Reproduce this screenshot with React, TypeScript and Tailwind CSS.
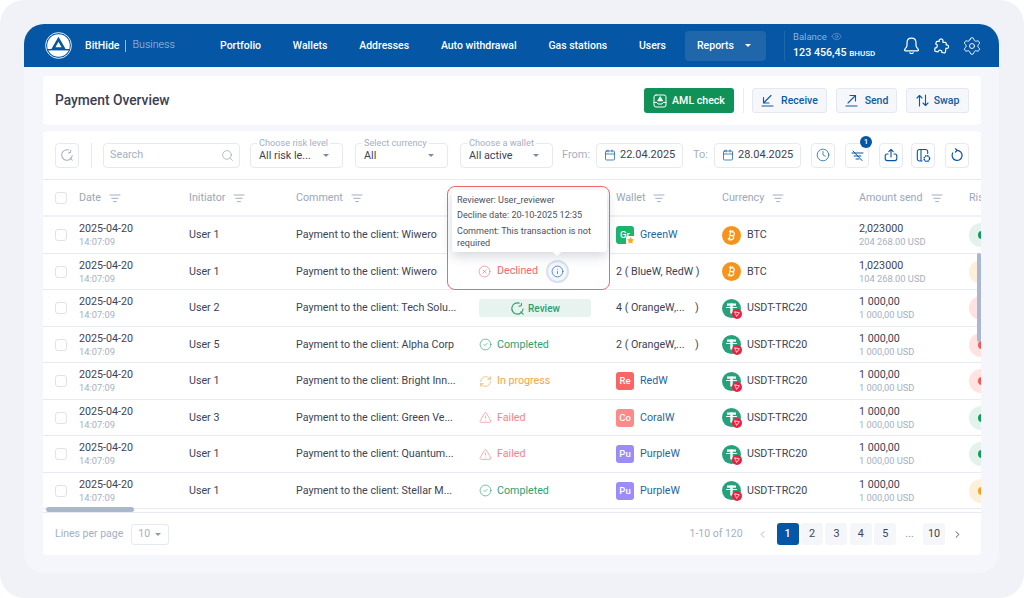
import { Bitcoin, Calendar, ChevronLeft, ChevronRight, CircleCheck, CircleX, Clock, Eye, Info, RefreshCw, Search, Settings, Star, TriangleAlert } from "lucide-react";

const cols = "grid grid-cols-[36px_110px_107px_183px_137px_106px_137px_110px_60px] items-center";

const rows = [
  { user: "User 1", comment: "Payment to the client: Wiwero", status: "hidden", wallet: "Gr", walletBg: "bg-[#1db56c]", name: "GreenW", cur: "BTC", amount: "2,023000", usd: "204 268.00 USD", risk: "green", star: true },
  { user: "User 1", comment: "Payment to the client: Wiwero", status: "hidden", plain: "2 ( BlueW, RedW )", cur: "BTC", amount: "1,023000", usd: "104 268.00 USD", risk: "amber" },
  { user: "User 2", comment: "Payment to the client: Tech Solu...", status: "review", plain: "4 ( OrangeW,...    )", cur: "USDT-TRC20", amount: "1 000,00", usd: "1 000,00 USD", risk: "red" },
  { user: "User 5", comment: "Payment to the client: Alpha Corp", status: "completed", plain: "2 ( OrangeW,...    )", cur: "USDT-TRC20", amount: "1 000,00", usd: "1 000,00 USD", risk: "red" },
  { user: "User 1", comment: "Payment to the client: Bright Inn...", status: "progress", wallet: "Re", walletBg: "bg-[#f96565]", name: "RedW", cur: "USDT-TRC20", amount: "1 000,00", usd: "1 000,00 USD", risk: "red" },
  { user: "User 3", comment: "Payment to the client: Green Ve...", status: "failed", wallet: "Co", walletBg: "bg-[#fb8a8a]", name: "CoralW", cur: "USDT-TRC20", amount: "1 000,00", usd: "1 000,00 USD", risk: "green" },
  { user: "User 1", comment: "Payment to the client: Quantum...", status: "failed", wallet: "Pu", walletBg: "bg-[#9c8cf8]", name: "PurpleW", cur: "USDT-TRC20", amount: "1 000,00", usd: "1 000,00 USD", risk: "green" },
  { user: "User 1", comment: "Payment to the client: Stellar M...", status: "completed", wallet: "Pu", walletBg: "bg-[#9c8cf8]", name: "PurpleW", cur: "USDT-TRC20", amount: "1 000,00", usd: "1 000,00 USD", risk: "orange" },
];

function Logo() {
  return (
    <svg width="27" height="27" viewBox="0 0 27 27" fill="none">
      <circle cx="13.5" cy="13.5" r="12.9" stroke="#fff" strokeWidth="0.9" />
      <circle cx="13.5" cy="13.5" r="11.3" fill="#fff" />
      <path d="M13.5 4.8 L20.6 17 H6.4 Z" fill="#0556a4" />
      <path d="M13.5 9.8 L16.6 15.2 H10.4 Z" fill="#fff" />
      <path d="M3 17 H24 V18.4 H3 Z" fill="#0556a4" />
    </svg>
  );
}

function BellIcon() {
  return (
    <svg width="17" height="18" viewBox="0 0 17 18" fill="none" stroke="#fff" strokeWidth="1.2" strokeLinecap="round" strokeLinejoin="round">
      <path d="M8.5 1.2 C5.6 1.2 4 3.4 4 6 V8.6 C4 10.4 2.2 11.4 1.6 12.6 C1.4 13.2 1.8 13.8 2.4 13.8 H14.6 C15.2 13.8 15.6 13.2 15.4 12.6 C14.8 11.4 13 10.4 13 8.6 V6 C13 3.4 11.4 1.2 8.5 1.2 Z" />
      <path d="M6.8 15.8 C7.6 16.7 9.4 16.7 10.2 15.8" />
    </svg>
  );
}

function PuzzleIcon() {
  return (
    <svg width="18" height="18" viewBox="0 0 18 18" fill="none" stroke="#fff" strokeWidth="1.2" strokeLinecap="round" strokeLinejoin="round">
      <path d="M7.3 4.4 C6.2 2 10.6 0.8 11 3.6 C11.1 4.4 10.8 4.8 10.9 5.3 H13.2 C13.9 5.3 14.2 5.7 14.2 6.3 V8 C16.8 7.2 17.8 11.6 14.6 11.4 L14 11.2 L13.4 15 C13.3 15.7 12.8 16 12.2 15.9 L9.8 15.5 C10.6 13 6.4 12.2 6.1 14.8 L3.6 14.4 C2.9 14.3 2.6 13.8 2.7 13.2 L3.1 10.8 C5.6 11.2 6.2 7.4 3.7 7 L4.2 5.2 C4.3 4.6 4.8 4.2 5.4 4.3 Z" />
    </svg>
  );
}

function FilterIcon() {
  return (
    <svg width="12" height="9" viewBox="0 0 12 9" fill="none" stroke="#a3aec3" strokeWidth="1" strokeLinecap="round">
      <path d="M1 1 H11 M2.8 4.3 H9.2 M4.6 7.6 H7.4" />
    </svg>
  );
}

function ReviewIcon({ color, size }: { color: string; size: number }) {
  return (
    <svg width={size} height={size} viewBox="0 0 16 16" fill="none" stroke={color} strokeWidth="1.2" strokeLinecap="round" strokeLinejoin="round">
      <path d="M9.8 2.3 A6 6 0 1 0 13.9 8.6" />
      <path d="M9.6 5.6 L12 5 M12 5 L12.3 2.6" />
      <path d="M11.6 11.6 L14 14" />
    </svg>
  );
}

function AmlIcon() {
  return (
    <svg width="14" height="14" viewBox="0 0 14 14" fill="none" stroke="#fff" strokeWidth="1" strokeLinecap="round" strokeLinejoin="round">
      <rect x="1" y="1" width="12" height="12" rx="2" />
      <path d="M1 8.4 H3.8 L5 10 H9 L10.2 8.4 H13" />
      <path d="M7 3 L4.8 6.8 H9.2 Z" fill="#fff" />
    </svg>
  );
}

function ReceiveIcon() {
  return (
    <svg width="13" height="13" viewBox="0 0 13 13" fill="none" stroke="#0f5aa3" strokeWidth="1.1" strokeLinecap="round" strokeLinejoin="round">
      <path d="M10 1.5 L2.5 9 M2.5 3.5 V9 H8" />
      <path d="M1 12 H12" />
    </svg>
  );
}

function SendIcon() {
  return (
    <svg width="13" height="13" viewBox="0 0 13 13" fill="none" stroke="#0f5aa3" strokeWidth="1.1" strokeLinecap="round" strokeLinejoin="round">
      <path d="M3 9 L10.5 1.5 M5 1.5 H10.5 V7" />
      <path d="M1 12 H12" />
    </svg>
  );
}

function SwapIcon() {
  return (
    <svg width="13" height="13" viewBox="0 0 13 13" fill="none" stroke="#0f5aa3" strokeWidth="1.1" strokeLinecap="round" strokeLinejoin="round">
      <path d="M3.5 12 V1.5 M1 4 L3.5 1.5 L6 4" />
      <path d="M9.5 1 V11.5 M7 9 L9.5 11.5 L12 9" />
    </svg>
  );
}

function TetherIcon() {
  return (
    <span className="relative block h-[19px] w-[19px] shrink-0 rounded-full bg-[#26a17b]">
      <svg className="absolute left-0 top-0" width="19" height="19" viewBox="0 0 19 19" fill="#fff">
        <rect x="5" y="4.5" width="9" height="2.2" />
        <rect x="8.3" y="4.5" width="2.4" height="10" />
        <rect x="4" y="8" width="11" height="1" rx="0.5" />
      </svg>
      <span className="absolute left-[10px] top-[10px] h-[10px] w-[10px] rounded-full bg-[#ee1f3f]" />
      <svg className="absolute left-[12px] top-[12px]" width="6" height="6" viewBox="0 0 6 6" fill="none" stroke="#fff" strokeWidth="0.8">
        <path d="M0.6 0.8 L5.4 1.8 L2.6 5.4 Z" />
      </svg>
    </span>
  );
}

function BitcoinIcon() {
  return (
    <span className="flex h-[19px] w-[19px] shrink-0 items-center justify-center rounded-full bg-[#f7931a]">
      <Bitcoin size={13} color="#fff" strokeWidth={2.2} />
    </span>
  );
}

function StatusCell({ status }: { status: string }) {
  if (status === "review") {
    return (
      <div className="flex h-[18px] w-[112px] items-center justify-center gap-[3px] rounded-[3px] bg-[#e7f3ee] text-[10px] font-medium text-[#2d9f6f]">
        <ReviewIcon color="#2d9f6f" size={15} />
        Review
      </div>
    );
  }
  if (status === "completed") {
    return (
      <div className="flex items-center gap-[5px] text-[10.7px] text-[#2fa06f]">
        <CircleCheck size={13} strokeWidth={1.2} />
        Completed
      </div>
    );
  }
  if (status === "progress") {
    return (
      <div className="flex items-center gap-[5px] text-[10.7px] text-[#f6a53f]">
        <RefreshCw size={13} strokeWidth={1.2} />
        In progress
      </div>
    );
  }
  if (status === "failed") {
    return (
      <div className="flex items-center gap-[5px] text-[10.7px] text-[#f98386]">
        <TriangleAlert size={13} strokeWidth={1.2} />
        Failed
      </div>
    );
  }
  return null;
}

function RiskDot({ risk }: { risk: string }) {
  const bg = risk === "green" ? "bg-[#e3f2eb]" : risk === "red" ? "bg-[#ffe3e3]" : "bg-[#fdf0db]";
  const dot = risk === "green" ? "bg-[#0f9d58]" : risk === "red" ? "bg-[#f45a5a]" : risk === "amber" ? "bg-[#f8d9a0]" : "bg-[#f8a020]";
  return (
    <span className={`relative block h-[24px] w-[24px] rounded-full ${bg}`}>
      <span className={`absolute left-[9px] top-[8px] h-[8px] w-[8px] rounded-full ${dot}`} />
    </span>
  );
}

function IconButton({ children }: { children: React.ReactNode }) {
  return (
    <div className="flex h-[25px] w-[24px] shrink-0 items-center justify-center rounded-[4px] border border-[#e6e9f2] text-[#0556a4]">
      {children}
    </div>
  );
}

function LabeledSelect({ label, value }: { label: string; value: string }) {
  return (
    <div className="relative flex h-[25px] w-[93px] shrink-0 items-center justify-between rounded-[4px] border border-[#e6e9f2] pl-[8px] pr-[13px] text-[10.8px] text-[#3d4356]">
      <span className="absolute left-[6px] top-[-7px] bg-white px-[2px] text-[9.2px] leading-[11px] text-[#a5afc4]">{label}</span>
      <span className="pt-[3px]">{value}</span>
      <span className="h-0 w-0 border-x-[3px] border-t-[3px] border-x-transparent border-t-[#7f8aa3]" />
    </div>
  );
}

function DateField({ value }: { value: string }) {
  return (
    <div className="flex h-[25px] w-[87px] shrink-0 items-center gap-[4px] rounded-[4px] border border-[#e6e9f2] pl-[7px] text-[11px] text-[#3d4356]">
      <Calendar size={12} color="#0556a4" strokeWidth={1.4} />
      <span className="pt-[1px]">{value}</span>
    </div>
  );
}

function HeaderCell({ label }: { label: string }) {
  return (
    <div className="flex items-center gap-[8px] pt-[2px] text-[10.7px] text-[#9aa6bd]">
      {label}
      <FilterIcon />
    </div>
  );
}

export default function App() {
  return (
    <div className="h-[598px] w-[1024px] overflow-hidden bg-white font-['Roboto',sans-serif]">
      <div className="h-[598px] rounded-[24px] bg-[#f0f2f7] pl-[24px] pr-[25px] pt-[24px]">
        <div className="h-[549px] rounded-[20px] bg-[#f5f6fb]">
          {/* Top bar */}
          <div className="flex h-[43px] items-center rounded-t-[20px] bg-[#0556a4] pl-[21px] text-white">
            <div className="flex w-[175px] shrink-0 items-center">
              <Logo />
              <span className="ml-[13px] text-[10.5px] font-medium">BitHide</span>
              <span className="ml-[6px] h-[12px] w-px bg-[#9bbcdc]" />
              <span className="ml-[6px] text-[10.7px] font-light text-[#a9c4e0]">Business</span>
            </div>
            <nav className="flex w-[446px] shrink-0 items-center justify-between text-[10.5px] font-medium">
              <span>Portfolio</span>
              <span>Wallets</span>
              <span>Addresses</span>
              <span>Auto withdrawal</span>
              <span>Gas stations</span>
              <span>Users</span>
            </nav>
            <div className="ml-[19px] flex h-[30px] w-[81px] shrink-0 items-center gap-[11px] rounded-[4px] bg-[#1f66ab] pl-[12px] text-[10.5px] font-medium">
              Reports
              <span className="h-0 w-0 border-x-[3px] border-t-[3px] border-x-transparent border-t-white" />
            </div>
            <div className="ml-[18px] h-[30px] w-px shrink-0 bg-[#1f66ab]" />
            <div className="ml-[8px] w-[110px] shrink-0">
              <div className="flex items-center gap-[4px] text-[9.5px] leading-[12px] text-[#8fb2d6]">
                Balance
                <Eye size={11} strokeWidth={1.2} />
              </div>
              <div className="mt-[3px] text-[10.7px] font-medium leading-[14px]">
                123 456,45 <span className="text-[8px]">BHUSD</span>
              </div>
            </div>
            <div className="flex items-center gap-[12px]">
              <BellIcon />
              <PuzzleIcon />
              <Settings size={20} strokeWidth={1.1} />
            </div>
          </div>

          <div className="pl-[19px] pr-[18px] pt-[9px]">
            {/* Title card */}
            <div className="flex h-[49px] items-center rounded-[4px] bg-white pl-[12px] pr-[12px]">
              <h1 className="text-[13.8px] font-medium text-[#3a4054]">Payment Overview</h1>
              <div className="ml-auto flex items-center">
                <div className="flex h-[25px] w-[90px] items-center justify-center gap-[5px] rounded-[3px] bg-[#0f9158] text-[10.6px] font-medium text-white">
                  <AmlIcon />
                  AML check
                </div>
                <div className="ml-[9px] mr-[8px] h-[25px] w-px bg-[#e9ecf4]" />
                <div className="flex h-[25px] w-[75px] items-center justify-center gap-[7px] rounded-[3px] border border-[#e3e8f2] bg-[#f5f7fb] text-[10.5px] font-medium text-[#0f5aa3]">
                  <ReceiveIcon />
                  Receive
                </div>
                <div className="ml-[9px] flex h-[25px] w-[61px] items-center justify-center gap-[7px] rounded-[3px] border border-[#e3e8f2] bg-[#f5f7fb] text-[10.5px] font-medium text-[#0f5aa3]">
                  <SendIcon />
                  Send
                </div>
                <div className="ml-[9px] flex h-[25px] w-[63px] items-center justify-center gap-[5px] rounded-[3px] border border-[#e3e8f2] bg-[#f5f7fb] text-[10.5px] font-medium text-[#0f5aa3]">
                  <SwapIcon />
                  Swap
                </div>
              </div>
            </div>

            {/* Table card */}
            <div className="mt-[6px] h-[424px] rounded-[4px] bg-white">
              {/* Filters */}
              <div className="flex h-[49px] items-center border-b border-[#e8eaf3] pl-[12px]">
                <IconButton>
                  <ReviewIcon color="#a5afc4" size={14} />
                </IconButton>
                <div className="ml-[12px] h-[25px] w-px bg-[#e6e9f2]" />
                <div className="ml-[11px] flex h-[25px] w-[137px] shrink-0 items-center justify-between rounded-[4px] border border-[#e6e9f2] pl-[6px] pr-[5px] text-[10.8px] text-[#a5afc4]">
                  <span className="pt-[1px]">Search</span>
                  <Search size={13} color="#8e99b0" strokeWidth={1.2} />
                </div>
                <div className="ml-[10px]">
                  <LabeledSelect label="Choose risk level" value="All risk le..." />
                </div>
                <div className="ml-[12px]">
                  <LabeledSelect label="Select currency" value="All" />
                </div>
                <div className="ml-[12px]">
                  <LabeledSelect label="Choose a wallet" value="All active" />
                </div>
                <span className="ml-[9px] w-[34px] pt-[1px] text-[11px] text-[#a5afc4]">From:</span>
                <DateField value="22.04.2025" />
                <span className="ml-[10px] w-[21px] pt-[1px] text-[11px] text-[#a5afc4]">To:</span>
                <DateField value="28.04.2025" />
                <div className="ml-[10px] flex items-center gap-[10px]">
                  <IconButton>
                    <Clock size={14} strokeWidth={1.2} />
                  </IconButton>
                  <div className="relative">
                    <IconButton>
                      <svg width="13" height="13" viewBox="0 0 13 13" fill="none" stroke="#0556a4" strokeWidth="1" strokeLinecap="round">
                        <path d="M1 4 H12 M3 7 H10 M5 10 H8 M2 2 L11 11.5" />
                      </svg>
                    </IconButton>
                    <span className="absolute right-[-3px] top-[-7px] flex h-[12px] w-[12px] items-center justify-center rounded-full bg-[#0556a4] text-[8px] font-medium text-white">1</span>
                  </div>
                  <IconButton>
                    <svg width="14" height="14" viewBox="0 0 14 14" fill="none" stroke="#0556a4" strokeWidth="1.1" strokeLinecap="round" strokeLinejoin="round">
                      <path d="M4 6 H3.2 A2 2 0 0 0 1.2 8 V10.6 A2 2 0 0 0 3.2 12.6 H10.8 A2 2 0 0 0 12.8 10.6 V8 A2 2 0 0 0 10.8 6 H10" />
                      <path d="M7 9 V1.4 M4.8 3.6 L7 1.4 L9.2 3.6" />
                    </svg>
                  </IconButton>
                  <div className="ml-[-2px]">
                    <IconButton>
                      <svg width="15" height="15" viewBox="0 0 15 15" fill="none" stroke="#0556a4" strokeWidth="1.1">
                        <path d="M6.5 13 H3.5 A2.2 2.2 0 0 1 1.3 10.8 V3.7 A2.2 2.2 0 0 1 3.5 1.5 H9.5 A2.2 2.2 0 0 1 11.7 3.7 V6" />
                        <path d="M5 1.5 V13" />
                        <circle cx="10.8" cy="10.6" r="2.8" strokeDasharray="1.6 0.6" strokeWidth="1.4" />
                      </svg>
                    </IconButton>
                  </div>
                  <IconButton>
                    <svg width="14" height="14" viewBox="0 0 14 14" fill="none" stroke="#0556a4" strokeWidth="1.2" strokeLinecap="round" strokeLinejoin="round">
                      <path d="M7 2.4 A5 5 0 1 1 2.7 5" />
                      <path d="M5.4 0.8 L7.2 2.4 L5.4 4.2" />
                    </svg>
                  </IconButton>
                </div>
              </div>

              {/* Table */}
              <div className="relative h-[332px] overflow-hidden">
                <div className={`${cols} h-[37px] border-b-2 border-[#f0f1f7]`}>
                  <span className="ml-[12px] block h-[12px] w-[12px] rounded-[3px] border border-[#dfe3ed]" />
                  <HeaderCell label="Date" />
                  <HeaderCell label="Initiator" />
                  <HeaderCell label="Comment" />
                  <span />
                  <HeaderCell label="Wallet" />
                  <HeaderCell label="Currency" />
                  <HeaderCell label="Amount send" />
                  <span className="pt-[2px] text-[10.7px] text-[#9aa6bd]">Risk</span>
                </div>

                {rows.map((r, i) => (
                  <div key={i} className={`${cols} h-[36.5px] border-b border-[#e8eaf3] pt-[1px] text-[10.7px] text-[#3d4356]`}>
                    <span className="ml-[12px] block h-[12px] w-[12px] rounded-[3px] border border-[#dfe3ed]" />
                    <div>
                      <div className="leading-[14px]">2025-04-20</div>
                      <div className="text-[9.3px] leading-[12px] text-[#a5afc4]">14:07:09</div>
                    </div>
                    <div>{r.user}</div>
                    <div>{r.comment}</div>
                    <div>
                      <StatusCell status={r.status} />
                    </div>
                    {r.plain ? (
                      <div className="whitespace-pre">{r.plain}</div>
                    ) : (
                      <div className="flex items-center gap-[6px]">
                        <span className={`relative flex h-[18px] w-[18px] items-center justify-center rounded-[3px] text-[9.5px] font-medium text-white ${r.walletBg}`}>
                          {r.wallet}
                          {r.star && (
                            <span className="absolute left-[10px] top-[10px] flex h-[9px] w-[9px] items-center justify-center rounded-[2px] bg-white">
                              <Star size={7} fill="#f7a823" color="#f7a823" />
                            </span>
                          )}
                        </span>
                        <span className="text-[#25659f]">{r.name}</span>
                      </div>
                    )}
                    <div className="flex items-center gap-[6px]">
                      {r.cur === "BTC" ? <BitcoinIcon /> : <TetherIcon />}
                      {r.cur}
                    </div>
                    <div>
                      <div className="leading-[14px]">{r.amount}</div>
                      <div className="text-[9.3px] leading-[12px] text-[#a5afc4]">{r.usd}</div>
                    </div>
                    <RiskDot risk={r.risk} />
                  </div>
                ))}

                {/* Scrollbars */}
                <span className="absolute right-0 top-[73px] h-[89px] w-[4px] rounded-[2px] bg-[#a9b8cf]" />
                <span className="absolute bottom-0 left-[3px] h-[5px] w-[88px] rounded-[3px] bg-[#a9b8cf]" />

                {/* Decline details popover */}
                <div className="absolute left-[404px] top-[6px] h-[104px] w-[163px] rounded-[8px] border-[1.5px] border-[#f4666a] bg-white">
                  <div className="relative ml-[4px] mt-[3px] h-[62px] w-[155px] rounded-[3px] bg-white px-[5px] pt-[4px] text-[9.1px] leading-[12px] text-[#4a5062] shadow-[0_4px_12px_rgba(60,70,100,0.22)]">
                    <div>Reviewer: User_reviewer</div>
                    <div className="mt-[3px]">Decline date: 20-10-2025 12:35</div>
                    <div className="mt-[4px]">Comment: This transaction is not required</div>
                    <span className="absolute bottom-[-3px] left-[102px] h-[6px] w-[6px] rotate-45 bg-white" />
                  </div>
                  <div className="ml-[30px] mt-[8px] flex items-center gap-[6px] text-[10.7px] text-[#f4666a]">
                    <CircleX size={13} strokeWidth={1.1} />
                    Declined
                    <span className="ml-[2px] flex h-[23px] w-[23px] items-center justify-center rounded-full border-[2px] border-[#d9e0ed] bg-[#f5f7fb]">
                      <Info size={13} color="#1f6ab0" strokeWidth={1.3} />
                    </span>
                  </div>
                </div>
              </div>

              {/* Pagination */}
              <div className="flex h-[43px] items-center border-t border-[#e8eaf3] pl-[12px] text-[10.5px] text-[#a5afc4]">
                Lines per page
                <div className="ml-[8px] flex h-[21px] w-[38px] items-center justify-between rounded-[3px] border border-[#e6e9f2] pl-[6px] pr-[7px]">
                  10
                  <span className="h-0 w-0 border-x-[3px] border-t-[3px] border-x-transparent border-t-[#8e99b0]" />
                </div>
                <span className="ml-auto">1-10 of 120</span>
                <ChevronLeft size={11} className="ml-[14px]" />
                <div className="ml-[9px] flex items-center gap-[2.4px] pr-[18px] text-[10.8px] text-[#3d4356]">
                  <span className="flex h-[22px] w-[22px] items-center justify-center rounded-[3px] bg-[#0556a4] font-medium text-white">1</span>
                  <span className="flex h-[22px] w-[22px] items-center justify-center rounded-[3px] bg-[#f5f6fa]">2</span>
                  <span className="flex h-[22px] w-[22px] items-center justify-center rounded-[3px] bg-[#f5f6fa]">3</span>
                  <span className="flex h-[22px] w-[22px] items-center justify-center rounded-[3px] bg-[#f5f6fa]">4</span>
                  <span className="flex h-[22px] w-[22px] items-center justify-center rounded-[3px] bg-[#f5f6fa]">5</span>
                  <span className="flex h-[22px] w-[22px] items-center justify-center text-[#8a93a8]">...</span>
                  <span className="flex h-[22px] w-[22px] items-center justify-center rounded-[3px] bg-[#f5f6fa]">10</span>
                  <ChevronRight size={11} className="ml-[4.6px] text-[#3d4356]" />
                </div>
              </div>
            </div>
          </div>
        </div>
      </div>
    </div>
  );
}
